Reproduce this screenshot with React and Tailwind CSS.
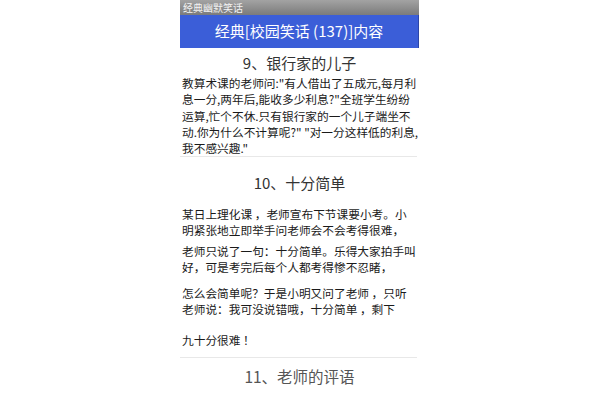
export default function App() {
  const font = { fontFamily: '"Noto Sans CJK SC", "Noto Sans", sans-serif' };
  const p9 = [
    '教算术课的老师问:"有人借出了五成元,每月利',
    '息一分,两年后,能收多少利息?"全班学生纷纷',
    '运算,忙个不休.只有银行家的一个儿子端坐不',
    '动.你为什么不计算呢?" "对一分这样低的利息,',
    '我不感兴趣."',
  ];
  return (
    <div className="w-[600px] h-[400px] bg-white flex justify-center overflow-hidden" style={font}>
      <div className="w-[239px] ml-[-1px] flex flex-col overflow-hidden">
        <div className="h-[15px] bg-gradient-to-b from-[#a3a3a3] to-[#7b7b7b] text-[10px] leading-[15px] text-[#f2f2f2] pl-[3px] whitespace-nowrap">
          经典幽默笑话
        </div>
        <div className="h-[33px] bg-[#3b5ed8] border-r border-[#2c46a8] flex items-center justify-center text-white text-[15px] whitespace-nowrap">
          经典[校园笑话 (137)]内容
        </div>
        <div className="mt-[4px] text-center text-[15px] leading-[21px] text-[#333] whitespace-nowrap">
          9、银行家的儿子
        </div>
        <div className="mt-[2px] pl-[2px] text-[11.7px] leading-[16.25px] text-[#1a1a1a] whitespace-nowrap">
          {p9.map((l, i) => (
            <div key={i}>{l}</div>
          ))}
        </div>
        <div className="h-px w-[237px] bg-[#e8e8e8]" />
        <div className="mt-[15px] text-center text-[15px] leading-[21px] text-[#333] whitespace-nowrap">
          10、十分简单
        </div>
        <div className="pl-[2px] text-[11.7px] leading-[16px] text-[#1a1a1a] whitespace-nowrap">
          <div className="mt-[13px]">
            <div>某日上理化课 ，老师宣布下节课要小考。小</div>
            <div>明紧张地立即举手问老师会不会考得很难，</div>
          </div>
          <div className="mt-[5px]">
            <div>老师只说了一句：十分简单。乐得大家拍手叫</div>
            <div>好，可是考完后每个人都考得惨不忍睹，</div>
          </div>
          <div className="mt-[10px]">
            <div>怎么会简单呢？于是小明又问了老师 ，只听</div>
            <div>老师说：我可没说错哦，十分简单 ，剩下</div>
          </div>
          <div className="mt-[15px]">
            <div>九十分很难 ！</div>
          </div>
        </div>
        <div className="mt-[9px] h-px w-[237px] bg-[#e8e8e8]" />
        <div className="mt-[8px] text-center text-[15.5px] leading-[21px] text-[#555] whitespace-nowrap">
          11、老师的评语
        </div>
      </div>
    </div>
  );
}
